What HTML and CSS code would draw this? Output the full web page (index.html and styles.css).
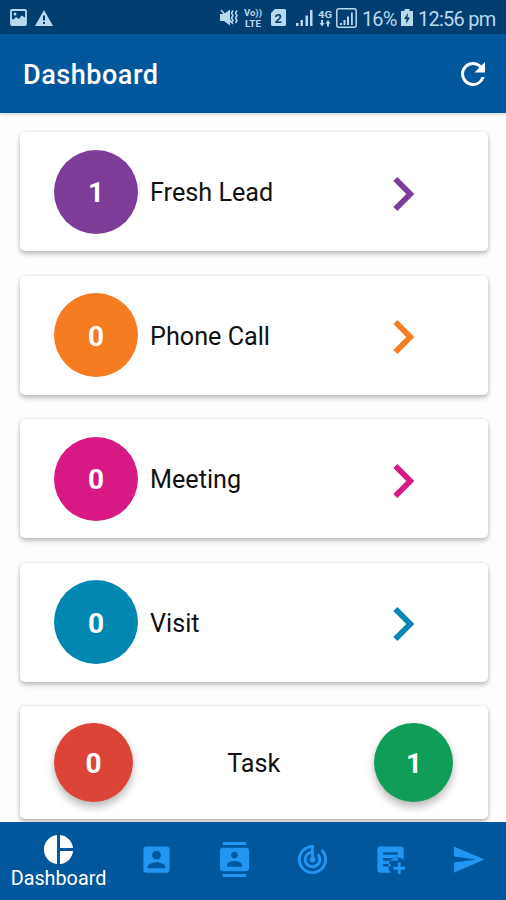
FILE: index.html
```html
<!DOCTYPE html>
<html lang="en">

<head>
    <meta charset="UTF-8">
    <meta name="viewport" content="width=device-width, initial-scale=1.0">
    <title>Dashboard</title>
    <link rel="stylesheet" href="styles.css">
</head>

<body>

    <div class="status-bar">
        <svg class="st-image" width="17" height="17" viewBox="0 0 17 17">
            <rect x="1" y="1" width="15" height="15" rx="1" fill="none" stroke="currentColor" stroke-width="1.8"/>
            <path d="M1 16V9.500l2.500 1 2.500-2.500 3 2 2.500-3.500L16 9v7z" fill="currentColor"/>
            <circle cx="5" cy="5" r="1.500" fill="currentColor"/>
        </svg>
        <svg class="st-warning" width="18" height="16" viewBox="0 0 18 16">
            <path d="M9 0l9 16H0z" fill="currentColor"/>
            <path d="M8 5.500h2v5H8zM8 12h2v2H8z" fill="#023e6f"/>
        </svg>

        <svg class="st-mute" width="19" height="17" viewBox="0 0 19 17">
            <path d="M0 5h4l6-4.500v16L4 12H0z" fill="currentColor"/>
            <path d="M1 1l12 14M13 1.500l-1.500 2.500 1.500 2.500-1.500 2.500 1.500 2.500-1.500 2.500M17 1.500l-1.500 2.500 1.500 2.500-1.500 2.500 1.500 2.500-1.500 2.500" fill="none" stroke="currentColor" stroke-width="1.500"/>
        </svg>
        <svg class="st-volte" width="20" height="24" viewBox="0 0 20 24">
            <text x="0" y="10" textLength="18" lengthAdjust="spacingAndGlyphs">Vo))</text>
            <text x="1" y="20.500" textLength="16" lengthAdjust="spacingAndGlyphs">LTE</text>
        </svg>
        <svg class="st-sim" width="15" height="17" viewBox="0 0 15 17">
            <path d="M4 0h10l1 1v15l-1 1H1l-1-1V4z" fill="currentColor"/>
            <text x="3.500" y="13.500">2</text>
        </svg>
        <svg class="st-signal" width="17" height="16" viewBox="0 0 17 16">
            <path d="M0 13h2.500v3H0zM4.500 10H7v6H4.500zM9.500 5.500H12V16H9.500zM14 0h2.500v16H14z" fill="currentColor"/>
        </svg>
        <svg class="st-data" width="15" height="20" viewBox="0 0 15 20">
            <text x="0" y="10" textLength="14" lengthAdjust="spacingAndGlyphs">4G</text>
            <path d="M3 12h2v3h1.500L4 18.500 1.500 15H3zM9 18.500h2v-3h1.500L10 12l-2.500 3.500H9z" fill="currentColor"/>
        </svg>
        <svg class="st-signal-box" width="21" height="20" viewBox="0 0 21 20">
            <rect x=".8" y=".8" width="19.400" height="18.400" rx="2" fill="none" stroke="currentColor" stroke-width="1.500"/>
            <path d="M4 15h2v2H4zM7.500 12h2v5h-2zM11 8.500h2V17h-2zM15 4.500h1.800V17H15z" fill="currentColor"/>
        </svg>
        <span class="st-percent">16%</span>
        <svg class="st-battery" width="12" height="17" viewBox="0 0 12 17">
            <path d="M3.500 0h5v2H12v15H0V2h3.500z" fill="currentColor"/>
            <path d="M7 4L3 10h2.500L5 15l4-6.500H6.500z" fill="#023e6f"/>
        </svg>
        <span class="st-time">12:56 pm</span>
    </div>

    <header class="app-bar">
        <h1>Dashboard</h1>
        <button class="refresh" aria-label="Refresh">
            <svg viewBox="0 0 24 24"><path d="M17.650 6.350A7.958 7.958 0 0 0 12 4a8 8 0 1 0 7.730 10h-2.080A5.990 5.990 0 0 1 12 18a6 6 0 1 1 0-12c1.660 0 3.140.690 4.220 1.780L13 11h7V4z"/></svg>
        </button>
    </header>

    <main class="cards">
        <div class="card purple">
            <span class="count">1</span>
            <span class="label">Fresh Lead</span>
            <svg class="chevron" viewBox="0 0 24 24"><path d="M10 6L8.590 7.410 13.170 12l-4.580 4.590L10 18l6-6z"/></svg>
        </div>
        <div class="card orange">
            <span class="count">0</span>
            <span class="label">Phone Call</span>
            <svg class="chevron" viewBox="0 0 24 24"><path d="M10 6L8.590 7.410 13.170 12l-4.580 4.590L10 18l6-6z"/></svg>
        </div>
        <div class="card pink">
            <span class="count">0</span>
            <span class="label">Meeting</span>
            <svg class="chevron" viewBox="0 0 24 24"><path d="M10 6L8.590 7.410 13.170 12l-4.580 4.590L10 18l6-6z"/></svg>
        </div>
        <div class="card teal">
            <span class="count">0</span>
            <span class="label">Visit</span>
            <svg class="chevron" viewBox="0 0 24 24"><path d="M10 6L8.590 7.410 13.170 12l-4.580 4.590L10 18l6-6z"/></svg>
        </div>
        <div class="card task">
            <span class="count red">0</span>
            <span class="label">Task</span>
            <span class="count green">1</span>
        </div>
    </main>

    <nav class="bottom-nav">
        <a class="nav-item active">
            <svg viewBox="0 0 24 24"><path d="M11 2v20c-5.070-.5-9-4.790-9-10s3.930-9.500 9-10zm2.030 0v8.990H22c-.470-4.740-4.240-8.520-8.970-8.990zm0 11.010V22c4.740-.470 8.500-4.250 8.970-8.990h-8.970z"/></svg>
            <span>Dashboard</span>
        </a>
        <a class="nav-item">
            <svg viewBox="0 0 24 24"><path d="M3 5v14a2 2 0 0 0 2 2h14c1.100 0 2-.9 2-2V5c0-1.100-.9-2-2-2H5a2 2 0 0 0-2 2zm12 4c0 1.660-1.340 3-3 3s-3-1.340-3-3 1.340-3 3-3 3 1.340 3 3zm-9 8c0-2 4-3.100 6-3.100s6 1.100 6 3.100v1H6v-1z"/></svg>
        </a>
        <a class="nav-item">
            <svg viewBox="0 0 24 24"><path d="M20 0H4v2h16V0zM4 24h16v-2H4v2zM20 4H4c-1.100 0-2 .9-2 2v12c0 1.100.9 2 2 2h16c1.100 0 2-.9 2-2V6c0-1.100-.9-2-2-2zm-8 2.750c1.240 0 2.250 1.010 2.250 2.250s-1.010 2.250-2.250 2.250S9.750 10.240 9.750 9 10.760 6.750 12 6.750zM17 17H7v-1.500c0-1.670 3.330-2.500 5-2.500s5 .830 5 2.500V17z"/></svg>
        </a>
        <a class="nav-item">
            <svg viewBox="0 0 24 24"><path d="M19.070 4.930l-1.410 1.410A8.014 8.014 0 0 1 20 12c0 4.420-3.580 8-8 8s-8-3.580-8-8c0-4.080 3.050-7.440 7-7.930v2.020C8.160 6.570 6 9.030 6 12c0 3.310 2.690 6 6 6s6-2.690 6-6c0-1.660-.670-3.160-1.760-4.240l-1.410 1.410C15.550 9.900 16 10.900 16 12c0 2.210-1.790 4-4 4s-4-1.790-4-4c0-1.860 1.280-3.410 3-3.860v2.140c-.6.350-1 .980-1 1.720 0 1.100.9 2 2 2s2-.9 2-2c0-.740-.4-1.380-1-1.720V2h-1C6.480 2 2 6.480 2 12s4.480 10 10 10 10-4.480 10-10c0-2.760-1.120-5.260-2.930-7.070z"/></svg>
        </a>
        <a class="nav-item">
            <svg viewBox="0 0 24 24"><path fill-rule="evenodd" d="M5 3h14a2 2 0 0 1 2 2v7.300A6 6 0 0 0 12.300 21H5a2 2 0 0 1-2-2V5a2 2 0 0 1 2-2zM7 7v1.800h10V7zM7 11v1.800h10V11zM7 15v1.800h5V15zM17 14h2v3h3v2h-3v3h-2v-3h-3v-2h3z"/></svg>
        </a>
        <a class="nav-item">
            <svg viewBox="0 0 24 24"><path d="M2.010 21L23 12 2.010 3 2 10l15 2-15 2z"/></svg>
        </a>
    </nav>

</body>

</html>
```
FILE: styles.css
```css
* {
    margin: 0;
    padding: 0;
    box-sizing: border-box;
}

body {
    display: flex;
    flex-direction: column;
    height: 100vh;
    overflow: hidden;
    font-family: Roboto, sans-serif;
    background: #fdfdfd;
    color: #111;
}

svg {
    display: block;
    flex-shrink: 0;
}

/* status bar */
.status-bar {
    display: flex;
    align-items: center;
    flex-shrink: 0;
    height: 34px;
    padding: 1px 0 0 10px;
    font-size: 20px;
    white-space: nowrap;
    background: #023e6f;
    color: #b9d9ee;
}

.status-bar text {
    fill: currentColor;
}

.status-bar .st-volte text,
.status-bar .st-data text {
    font-size: 9.5px;
    font-weight: 700;
}

.status-bar .st-volte text {
    font-size: 9px;
}

.status-bar .st-sim text {
    font-size: 13px;
    font-weight: 700;
    fill: #023e6f;
}

.st-warning {
    margin-left: 8px;
}

.st-mute {
    margin-left: 167px;
}

.st-volte {
    margin-left: 5px;
}

.st-sim {
    margin-left: 7px;
}

.st-signal {
    margin-left: 10px;
}

.st-data {
    margin-left: 5px;
}

.st-signal-box {
    margin-left: 3px;
}

.st-percent {
    width: 36px;
    margin-left: 5px;
    padding-top: 2px;
    letter-spacing: -0.9px;
}

.st-battery {
    margin-left: 3px;
}

.st-time {
    margin-left: 5px;
    padding-top: 2px;
    letter-spacing: -0.75px;
}

/* app bar */
.app-bar {
    display: flex;
    align-items: center;
    justify-content: space-between;
    flex-shrink: 0;
    height: 79px;
    padding: 1px 15px 0 23px;
    background: #01579b;
    box-shadow: 0 1px 4px rgba(0, 0, 0, 0.2);
}

h1 {
    padding-top: 2px;
    font-size: 27px;
    font-weight: 500;
    letter-spacing: 0.55px;
    color: white;
}

.refresh {
    width: 36px;
    height: 36px;
    border: none;
    background: none;
    cursor: pointer;
}

.refresh path {
    fill: white;
}

/* cards */
.cards {
    display: flex;
    flex-direction: column;
    flex: 1;
    gap: 24.5px;
    min-height: 0;
    padding: 19px 18.5px 0 20px;
    overflow: hidden;
}

.card {
    display: flex;
    align-items: center;
    flex-shrink: 0;
    height: 119px;
    padding: 0 51px 0 34px;
    background: white;
    border-radius: 5px;
    box-shadow: 0 3px 5px rgba(0, 0, 0, 0.24), 0 0 3px rgba(0, 0, 0, 0.12);
}

.count {
    display: flex;
    align-items: center;
    justify-content: center;
    width: 84px;
    height: 84px;
    padding-top: 2px;
    border-radius: 50%;
    font-size: 28px;
    font-weight: 700;
    color: white;
}

.label {
    margin-left: 12px;
    padding-top: 2px;
    font-size: 25.2px;
}

.chevron {
    width: 68px;
    height: 68px;
    margin: 4px 0 0 auto;
}

.purple .count {
    background: #7d3c98;
}

.purple .chevron {
    fill: #7d3c98;
}

.orange .count {
    background: #f57c20;
}

.orange .chevron {
    fill: #f57c20;
}

.pink .count {
    background: #d81884;
}

.pink .chevron {
    fill: #d81884;
}

.teal .count {
    background: #0288b0;
}

.teal .chevron {
    fill: #0288b0;
}

.task {
    justify-content: space-between;
    height: 113px;
    padding-right: 34px;
}

.task .label {
    margin: 0;
}

.task .count {
    width: 79px;
    height: 79px;
    box-shadow: 0 5px 9px rgba(0, 0, 0, 0.28);
}

.task .red {
    background: #dd4438;
}

.task .green {
    background: #109d58;
}

/* bottom navigation */
.bottom-nav {
    display: flex;
    flex-shrink: 0;
    height: 78px;
    background: #01579b;
}

.nav-item {
    display: flex;
    flex-direction: column;
    align-items: center;
    flex-shrink: 0;
    width: 78px;
    padding-top: 20px;
    color: #2196f3;
}

.nav-item svg {
    width: 35px;
    height: 35px;
    fill: currentColor;
}

.nav-item.active {
    width: 117px;
    padding-top: 10px;
    font-size: 19.8px;
    line-height: 24px;
    color: white;
}
```
